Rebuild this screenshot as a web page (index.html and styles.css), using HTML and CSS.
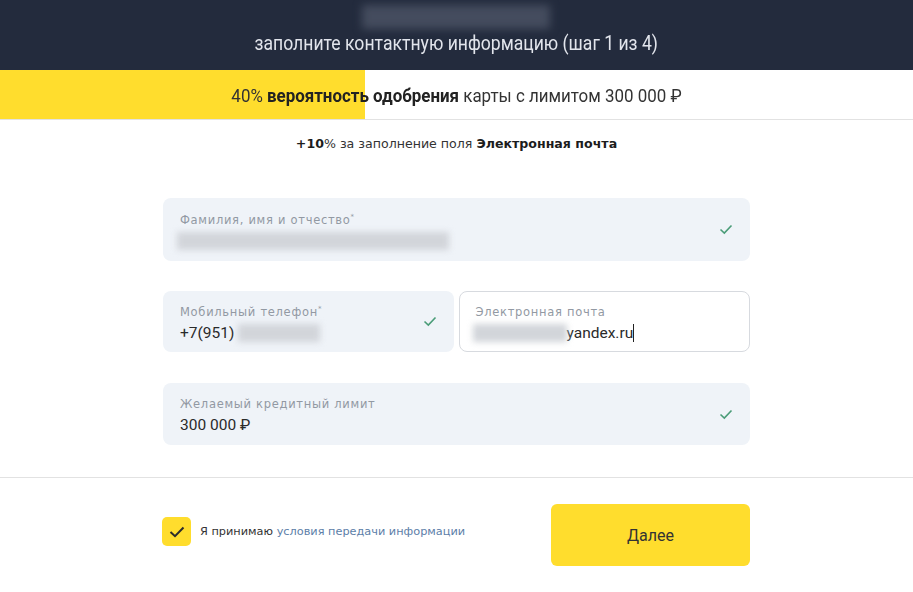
FILE: index.html
```
<!DOCTYPE html>
<html lang="ru">
<head>
    <meta charset="UTF-8">
    <title>Заявка</title>
    <link rel="stylesheet" href="styles.css">
</head>
<body>
    <div class="header">
        <div class="header-blur"></div>
        <div class="header-title">заполните контактную информацию (шаг 1 из 4)</div>
    </div>
    <div class="progress">
        <div class="progress-fill"></div>
        <div class="progress-text">40% <b>вероятность одобрения</b> карты с лимитом 300 000 ₽</div>
    </div>

    <div class="bonus"><b>+10</b>% за заполнение поля <b>Электронная почта</b></div>

    <div class="form">
        <div class="field filled first">
            <div class="field-body">
                <div class="label">Фамилия, имя и отчество<sup>*</sup></div>
                <div class="value"><span class="blur blur-name"></span></div>
            </div>
            <svg class="check" width="14" height="11" viewBox="0 0 14 11"><path d="M1.5 5.5l3.8 3.6L12.5 1.5" fill="none" stroke="#4a9c78" stroke-width="1.6"/></svg>
        </div>

        <div class="row">
            <div class="field filled">
                <div class="field-body">
                    <div class="label">Мобильный телефон<sup>*</sup></div>
                    <div class="value">+7(951) <span class="blur blur-phone"></span></div>
                </div>
                <svg class="check" width="14" height="11" viewBox="0 0 14 11"><path d="M1.5 5.5l3.8 3.6L12.5 1.5" fill="none" stroke="#4a9c78" stroke-width="1.6"/></svg>
            </div>
            <div class="field active">
                <div class="field-body">
                    <div class="label">Электронная почта</div>
                    <div class="value"><span class="blur blur-mail"></span>yandex.ru<span class="caret"></span></div>
                </div>
            </div>
        </div>

        <div class="field filled">
            <div class="field-body">
                <div class="label">Желаемый кредитный лимит</div>
                <div class="value">300 000 ₽</div>
            </div>
            <svg class="check" width="14" height="11" viewBox="0 0 14 11"><path d="M1.5 5.5l3.8 3.6L12.5 1.5" fill="none" stroke="#4a9c78" stroke-width="1.6"/></svg>
        </div>
    </div>

    <div class="footer">
        <div class="footer-inner">
            <label class="agree">
                <span class="box">
                    <svg width="16" height="12" viewBox="0 0 16 12"><path d="M1.5 6l4.5 4.2L14.5 1.5" fill="none" stroke="#2b2b2b" stroke-width="2"/></svg>
                </span>
                <span>Я принимаю <a href="#">условия передачи информации</a></span>
            </label>
            <button class="next">Далее</button>
        </div>
    </div>
</body>
</html>
```

FILE: styles.css
```
* {
    margin: 0;
    padding: 0;
    box-sizing: border-box;
}
body {
    font-family: "Liberation Sans", Arial, sans-serif;
    color: #333;
    background: #fff;
}
.header {
    height: 70px;
    background-color: #232b3d;
    position: relative;
    display: flex;
    align-items: flex-end;
    justify-content: center;
    padding-bottom: 15px;
}
.header-blur { /*размытый логотип*/
    position: absolute;
    left: 362px;
    top: 5px;
    width: 188px;
    height: 24px;
    background-color: #444c5e;
    filter: blur(4px);
}
.header-title {
    font-family: Roboto, sans-serif;
    font-size: 20px;
    color: #e2e5ec;
    transform: scaleX(0.88);
}
.progress {
    height: 50px;
    position: relative;
    border-bottom: 1px solid #e2e2e2;
    display: flex;
    align-items: center;
    justify-content: center;
}
.progress-fill {
    position: absolute;
    left: 0;
    top: 0;
    bottom: 0;
    width: 40%;
    background-color: #ffdd2d;
}
.progress-text {
    position: relative;
    font-family: Roboto, sans-serif;
    font-size: 18px;
    color: #333;
    transform: scaleX(0.94);
    padding-top: 2px;
}
.progress-text b {
    color: #222;
}
.bonus {
    text-align: center;
    font-family: "DejaVu Sans", sans-serif;
    font-size: 12.6px;
    color: #333;
    margin-top: 16px;
}
.bonus b {
    color: #1c1c1c;
}
.form {
    width: 587px;
    margin: 47px auto 0;
    display: flex;
    flex-direction: column;
    gap: 30px;
    padding-bottom: 32px;
}
.row {
    display: flex;
    gap: 5px;
    margin-bottom: 1px;
}
.row .field {
    flex: 1;
    height: 61px;
}
.field {
    height: 62px;
    border-radius: 8px;
    display: flex;
    align-items: center;
    padding: 4px 17px 0 17px;
    font-family: Roboto, sans-serif;
}
.first {
    height: 63px;
}
.filled {
    background-color: #eff3f8;
}
.active {
    background-color: #fff;
    border: 1px solid #d7dadf;
    padding-left: 16px;
}
.field-body {
    flex: 1;
}
.label {
    font-family: "DejaVu Sans", sans-serif;
    font-size: 11.5px;
    letter-spacing: 0.7px;
    color: #9299a3;
    margin-bottom: 4px;
}
.label sup {
    font-size: 7px;
    vertical-align: top;
    line-height: 8px;
}
.value {
    font-size: 15.5px;
    color: #2a2a2a;
    height: 20px;
    display: flex;
    align-items: center;
}
.blur {
    display: inline-block;
    height: 18px;
    background-color: #d2d5da;
    filter: blur(3px);
}
.blur-name {
    width: 272px;
    margin-left: -3px;
}
.blur-phone {
    width: 82px;
    margin-left: 4px;
}
.blur-mail {
    width: 94px;
    margin-left: -3px;
}
.caret {
    display: inline-block;
    width: 1px;
    height: 18px;
    background-color: #222;
}
.check {
    flex: none;
    margin-top: -4px;
}
.footer {
    border-top: 1px solid #e2e2e2;
}
.footer-inner {
    width: 587px;
    margin: 0 auto;
    display: flex;
    align-items: center;
    justify-content: space-between;
    padding-top: 26px;
}
.agree {
    display: flex;
    align-items: center;
    gap: 9px;
    font-size: 11.3px;
    font-family: "DejaVu Sans", sans-serif;
    color: #333;
    margin-bottom: 7px;
}
.agree a {
    color: #5c7ea8;
    text-decoration: none;
}
.box {
    width: 29px;
    height: 29px;
    border-radius: 5px;
    background-color: #ffdd2d;
    display: flex;
    align-items: center;
    justify-content: center;
    margin-left: -1px;
}
.next {
    width: 199px;
    height: 62px;
    border: none;
    border-radius: 6px;
    background-color: #ffdd2d;
    font-family: Roboto, sans-serif;
    font-size: 16px;
    color: #333;
}
```
